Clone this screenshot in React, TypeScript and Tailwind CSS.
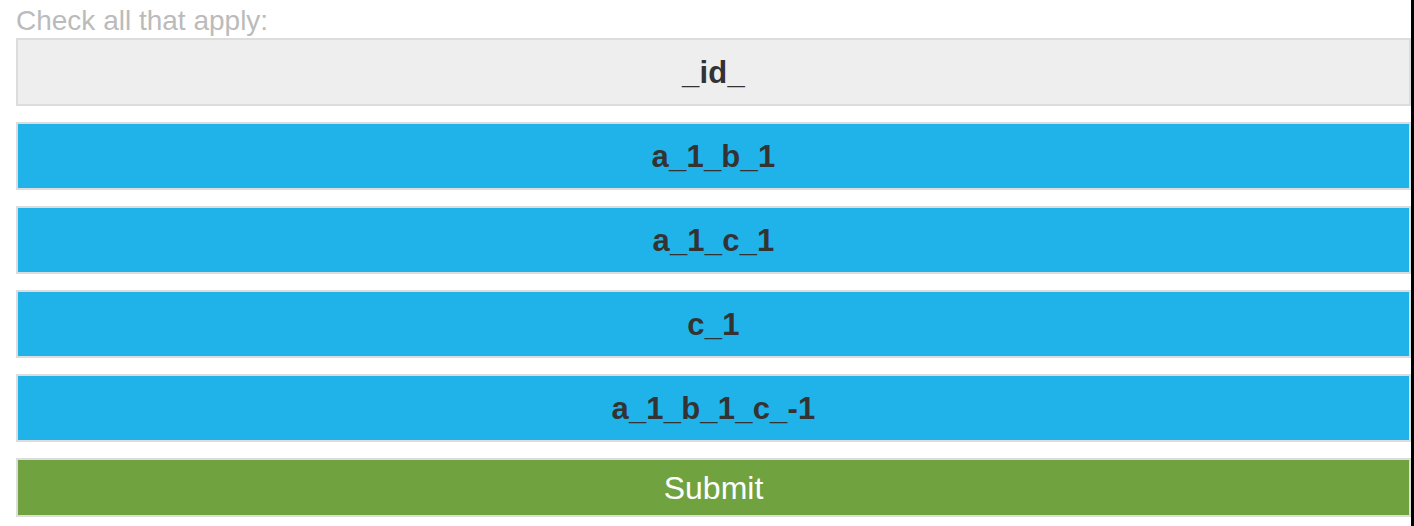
import React from "react";

const items = ["a_1_b_1", "a_1_c_1", "c_1", "a_1_b_1_c_-1"];

export default function App() {
  return (
    <div className="flex w-[1414px] h-[526px] bg-white overflow-hidden" style={{ fontFamily: '"Liberation Sans", Arial, sans-serif' }}>
      <div className="flex-1 pl-[16px] pt-[4px]">
        <div className="h-[32px] leading-[34px] text-[28px] text-[#bbbbbb] mb-[2px] whitespace-nowrap">Check all that apply:</div>
        <div className="flex flex-col gap-[16px]">
          <div className="h-[68px] pt-[2px] border-2 border-[#dddddd] bg-[#eeeeee] flex items-center justify-center text-[31px] tracking-[0.2px] font-bold text-[#333333]">_id_</div>
          {items.map((t) => (
            <div key={t} className="h-[68px] pt-[2px] border-2 border-[#dddddd] bg-[#1fb3ea] flex items-center justify-center text-[31px] tracking-[0.2px] font-bold text-[#333333]">{t}</div>
          ))}
          <div className="h-[59px] border-2 border-[#dddddd] bg-[#70a340] flex items-center justify-center text-[32px] text-white">Submit</div>
        </div>
      </div>
      <div className="w-[3px] h-full bg-black" />
    </div>
  );
}
